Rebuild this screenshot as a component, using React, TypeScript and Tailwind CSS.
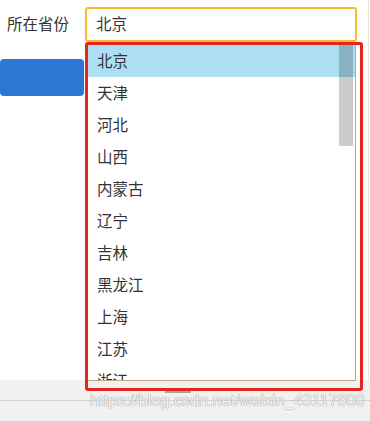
const provinces = ['北京', '天津', '河北', '山西', '内蒙古', '辽宁', '吉林', '黑龙江', '上海', '江苏', '浙江'];

export default function App() {
  return (
    <div
      className="relative w-[370px] h-[421px] overflow-hidden bg-white text-[#333]"
      style={{ fontFamily: '"Noto Sans CJK SC", "Noto Sans", sans-serif' }}
    >
      {/* Form */}
      <div className="h-[380px] w-[369px] border-r border-[#e6e6e6] flex flex-col">
        <div className="flex items-center h-[36px] mt-[6px]">
          <span className="w-[85px] pl-[7px] text-[15.5px]">所在省份</span>
          <div className="w-[272px] h-[35px] border-[2.5px] border-[#f5bb2c] rounded-[3px] flex items-center pl-[9px] text-[15.5px]">
            北京
          </div>
        </div>
        <div className="mt-[17px] w-[84px] h-[37px] bg-[#2b77d3] rounded-[4px]" />
      </div>

      {/* Footer strip */}
      <div className="h-[41px] bg-[#f1f1f1] flex flex-col">
        <div className="pt-[11px] flex justify-center">
          <div className="ml-[-14px] w-[26px] h-[2px] bg-[#a2a2a2]" />
        </div>
        <div className="mt-[7px] h-px bg-[#d2d2d2]" />
      </div>

      {/* Dropdown list */}
      <div className="absolute left-[87px] top-[44px] w-[269px] h-[337px] border border-[#bba985] bg-white overflow-hidden">
        {provinces.map((p, i) => (
          <div
            key={p}
            className={`h-[32px] flex items-center pl-[9px] text-[15.5px] ${i === 0 ? 'bg-[#addff4]' : ''}`}
          >
            {p}
          </div>
        ))}
        <div className="absolute right-[2px] top-0 w-[14px] h-[101px] bg-black/20" />
      </div>

      {/* Red annotation box */}
      <div className="absolute left-[85px] top-[42px] w-[278px] h-[349px] border-[3px] border-[#e4261c] rounded-[3px] pointer-events-none" />

      {/* Watermark */}
      <div
        className="absolute left-[90px] top-[391px] text-[16px] leading-[20px] tracking-[0.1px] text-[#f4f4f4] [text-shadow:0_0_1px_#9a9a9a,0_0_1px_#9a9a9a]"
        style={{ fontFamily: '"Liberation Sans", Arial, sans-serif' }}
      >
        https://blog.csdn.net/weixin_43117800
      </div>
    </div>
  );
}
